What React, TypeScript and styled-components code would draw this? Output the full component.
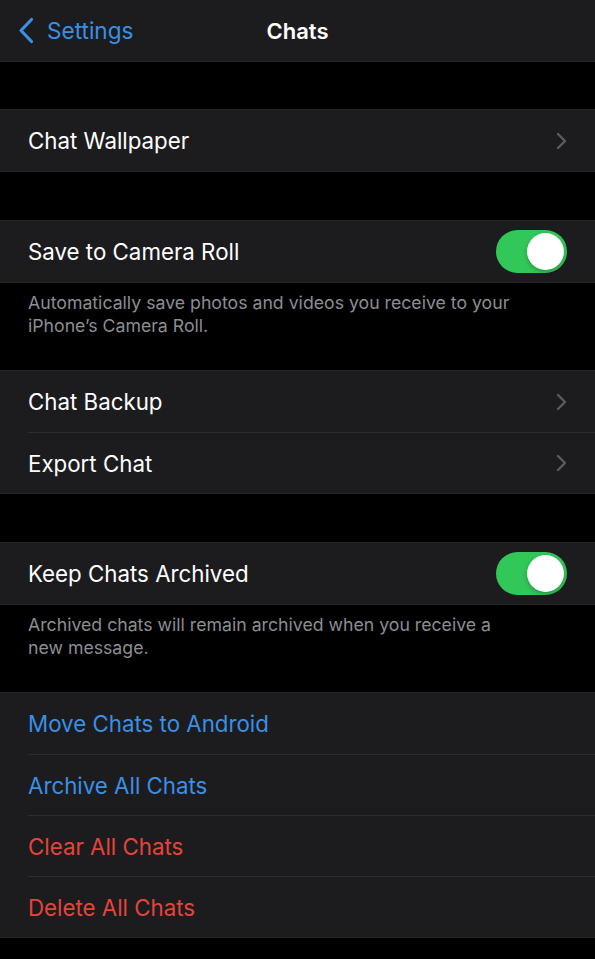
import React, { useState } from 'react';
import styled, { createGlobalStyle } from 'styled-components';

const GlobalStyle = createGlobalStyle`
  html, body {
    margin: 0;
    padding: 0;
    background: #000;
  }
  body {
    font-family: Inter, "Noto Sans", "Liberation Sans", sans-serif;
    -webkit-font-smoothing: antialiased;
  }
  * {
    box-sizing: border-box;
  }
`;

const Page = styled.div`
  width: 595px;
  min-height: 959px;
  background: #000;
  display: flex;
  flex-direction: column;
`;

const NavBar = styled.div`
  height: 62px;
  background: #1c1c1e;
  border-bottom: 1px solid #262628;
  display: grid;
  grid-template-columns: 1fr auto 1fr;
  align-items: center;
  padding: 0 18px;
`;

const BackButton = styled.div`
  display: flex;
  align-items: center;
  gap: 13px;
  color: #3b8fe4;
  font-size: 22.6px;
`;

const NavTitle = styled.div`
  color: #fff;
  font-size: 22px;
  font-weight: 600;
`;

const Spacer = styled.div<{ $h: number }>`
  height: ${(p) => p.$h}px;
`;

const Group = styled.div`
  background: #1c1c1e;
  border-top: 1px solid #262628;
  border-bottom: 1px solid #262628;
`;

const Row = styled.div`
  height: 61px;
  display: flex;
  align-items: center;
  justify-content: space-between;
  padding: 0 28px;
  & + & {
    border-top: 1px solid #2c2c2e;
    margin-left: 28px;
    padding-left: 0;
  }
`;

const Label = styled.span<{ $tone?: 'default' | 'blue' | 'red' }>`
  font-size: 22.3px;
  color: ${(p) => (p.$tone === 'blue' ? '#3b8fe4' : p.$tone === 'red' ? '#e5443b' : '#fff')};
`;

const Footer = styled.div`
  height: 87px;
  color: #8d8d93;
  font-size: 17.7px;
  line-height: 23px;
  padding: 8px 78px 0 28px;
`;

const Track = styled.button<{ $on: boolean }>`
  width: 71px;
  height: 43px;
  border-radius: 22px;
  border: none;
  padding: 3px;
  background: ${(p) => (p.$on ? '#32c759' : '#39393d')};
  display: flex;
  justify-content: ${(p) => (p.$on ? 'flex-end' : 'flex-start')};
  cursor: pointer;
`;

const Knob = styled.span`
  width: 37px;
  height: 37px;
  border-radius: 50%;
  background: #fff;
  box-shadow: 0 2px 4px rgba(0, 0, 0, 0.25);
`;

const Chevron = () => (
  <svg width="11" height="18" viewBox="0 0 11 18" fill="none">
    <path d="M2 2l7 7-7 7" stroke="#5b5b60" strokeWidth="2.4" strokeLinecap="round" strokeLinejoin="round" />
  </svg>
);

const BackChevron = () => (
  <svg width="16" height="27" viewBox="0 0 16 27" fill="none">
    <path d="M13.5 2.5L3 13.5l10.5 11" stroke="#3b8fe4" strokeWidth="3.2" strokeLinecap="round" strokeLinejoin="round" />
  </svg>
);

const Toggle = ({ initial }: { initial: boolean }) => {
  const [on, setOn] = useState(initial);
  return (
    <Track $on={on} onClick={() => setOn(!on)}>
      <Knob />
    </Track>
  );
};

export default function App() {
  return (
    <Page>
      <GlobalStyle />
      <NavBar>
        <BackButton>
          <BackChevron />
          Settings
        </BackButton>
        <NavTitle>Chats</NavTitle>
        <div />
      </NavBar>

      <Spacer $h={47} />
      <Group>
        <Row>
          <Label>Chat Wallpaper</Label>
          <Chevron />
        </Row>
      </Group>

      <Spacer $h={48} />
      <Group>
        <Row>
          <Label>Save to Camera Roll</Label>
          <Toggle initial />
        </Row>
      </Group>
      <Footer>Automatically save photos and videos you receive to your iPhone’s Camera Roll.</Footer>

      <Group>
        <Row>
          <Label>Chat Backup</Label>
          <Chevron />
        </Row>
        <Row>
          <Label>Export Chat</Label>
          <Chevron />
        </Row>
      </Group>

      <Spacer $h={48} />
      <Group>
        <Row>
          <Label>Keep Chats Archived</Label>
          <Toggle initial />
        </Row>
      </Group>
      <Footer>Archived chats will remain archived when you receive a new message.</Footer>

      <Group>
        <Row>
          <Label $tone="blue">Move Chats to Android</Label>
        </Row>
        <Row>
          <Label $tone="blue">Archive All Chats</Label>
        </Row>
        <Row>
          <Label $tone="red">Clear All Chats</Label>
        </Row>
        <Row>
          <Label $tone="red">Delete All Chats</Label>
        </Row>
      </Group>
    </Page>
  );
}
